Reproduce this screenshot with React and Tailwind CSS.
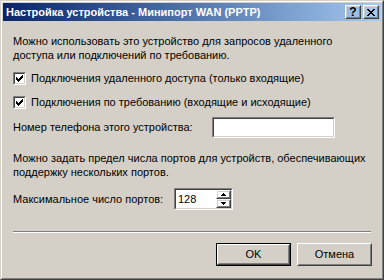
import React from "react";

// classic Win2000 check mark, 7x7 pixels
const CheckMark = () => (
  <svg width="7" height="7" viewBox="0 0 7 7" shapeRendering="crispEdges" fill="#000">
    <rect x="6" y="0" width="1" height="1" />
    <rect x="5" y="1" width="2" height="1" />
    <rect x="0" y="2" width="1" height="1" />
    <rect x="4" y="2" width="3" height="1" />
    <rect x="0" y="3" width="2" height="1" />
    <rect x="3" y="3" width="3" height="1" />
    <rect x="0" y="4" width="5" height="1" />
    <rect x="1" y="5" width="3" height="1" />
    <rect x="2" y="6" width="1" height="1" />
  </svg>
);

const CloseGlyph = () => (
  <svg width="8" height="7" viewBox="0 0 8 7" shapeRendering="crispEdges" fill="#000">
    <rect x="0" y="0" width="2" height="1" />
    <rect x="6" y="0" width="2" height="1" />
    <rect x="1" y="1" width="2" height="1" />
    <rect x="5" y="1" width="2" height="1" />
    <rect x="2" y="2" width="4" height="1" />
    <rect x="3" y="3" width="2" height="1" />
    <rect x="2" y="4" width="4" height="1" />
    <rect x="1" y="5" width="2" height="1" />
    <rect x="5" y="5" width="2" height="1" />
    <rect x="0" y="6" width="2" height="1" />
    <rect x="6" y="6" width="2" height="1" />
  </svg>
);

const Arrow = ({ up }) => (
  <svg width="5" height="3" viewBox="0 0 5 3" shapeRendering="crispEdges" fill="#000">
    {up ? (
      <>
        <rect x="2" y="0" width="1" height="1" />
        <rect x="1" y="1" width="3" height="1" />
        <rect x="0" y="2" width="5" height="1" />
      </>
    ) : (
      <>
        <rect x="0" y="0" width="5" height="1" />
        <rect x="1" y="1" width="3" height="1" />
        <rect x="2" y="2" width="1" height="1" />
      </>
    )}
  </svg>
);

// raised push-button edges
function Raised({ className = "", children }) {
  return (
    <div className={`border border-t-white border-l-white border-r-[#404040] border-b-[#404040] ${className}`}>
      <div className="w-full h-full border border-t-[#d4d0c8] border-l-[#d4d0c8] border-r-[#808080] border-b-[#808080] flex items-center justify-center">
        {children}
      </div>
    </div>
  );
}

// sunken field edges
function Sunken({ className = "", children }) {
  return (
    <div className={`border border-t-[#808080] border-l-[#808080] border-r-white border-b-white ${className}`}>
      <div className="w-full h-full border border-t-[#404040] border-l-[#404040] border-r-[#d4d0c8] border-b-[#d4d0c8] bg-white flex">
        {children}
      </div>
    </div>
  );
}

function CheckRow({ label }) {
  return (
    <div className="flex items-center h-[13px]">
      <Sunken className="w-[13px] h-[13px] shrink-0">
        <div className="w-full h-full flex items-center justify-center">
          <CheckMark />
        </div>
      </Sunken>
      <span className="ml-[5px]">{label}</span>
    </div>
  );
}

export default function App() {
  return (
    <div className="w-[384px] h-[280px] bg-[#d4d0c8] border border-t-[#d4d0c8] border-l-[#d4d0c8] border-r-[#404040] border-b-[#404040] font-['Liberation_Sans',Arial,sans-serif] text-[11px] text-black">
      <div className="w-full h-full border border-t-white border-l-white border-r-[#808080] border-b-[#808080] p-[1px] flex flex-col">
        {/* title bar */}
        <div className="h-[18px] shrink-0 flex items-center pl-[3px] pr-[2px] bg-gradient-to-r from-[#0a246a] to-[#a6caf0]">
          <span className="flex-1 text-white font-bold text-[11px] leading-none">
            Настройка устройства - Минипорт WAN (PPTP)
          </span>
          <Raised className="w-[16px] h-[14px]">
            <span className="font-bold text-[12px] leading-none">?</span>
          </Raised>
          <Raised className="w-[16px] h-[14px] ml-[2px]">
            <CloseGlyph />
          </Raised>
        </div>

        {/* body */}
        <div className="flex-1 flex flex-col px-[10px]">
          <p className="mt-[13px] leading-[14px]">
            Можно использовать это устройство для запросов удаленного
            <br />
            доступа или подключений по требованию.
          </p>

          <div className="mt-[10px]">
            <CheckRow label="Подключения удаленного доступа (только входящие)" />
          </div>
          <div className="mt-[11px]">
            <CheckRow label="Подключения по требованию (входящие и исходящие)" />
          </div>

          <div className="mt-[8px] flex items-center">
            <span className="w-[199px]">Номер телефона этого устройства:</span>
            <Sunken className="w-[123px] h-[21px]" />
          </div>

          <p className="mt-[13px] leading-[14px]">
            Можно задать предел числа портов для устройств, обеспечивающих
            <br />
            поддержку нескольких портов.
          </p>

          <div className="mt-[9px] flex items-center">
            <span className="w-[161px]">Максимальное число портов:</span>
            <Sunken className="w-[59px] h-[22px]">
              <span className="flex-1 pl-[2px] self-center leading-none">128</span>
              <div className="w-[15px] flex flex-col">
                <Raised className="h-[9px] w-full">
                  <Arrow up />
                </Raised>
                <Raised className="h-[9px] w-full">
                  <Arrow />
                </Raised>
              </div>
            </Sunken>
          </div>

          <div className="mt-[21px]">
            <div className="h-px bg-[#808080]" />
            <div className="h-px bg-white" />
          </div>

          <div className="mt-[10px] flex justify-end gap-[6px] mr-[-1px]">
            <div className="w-[75px] h-[23px] border border-black">
              <Raised className="w-full h-full">OK</Raised>
            </div>
            <Raised className="w-[75px] h-[23px]">Отмена</Raised>
          </div>
        </div>
      </div>
    </div>
  );
}
